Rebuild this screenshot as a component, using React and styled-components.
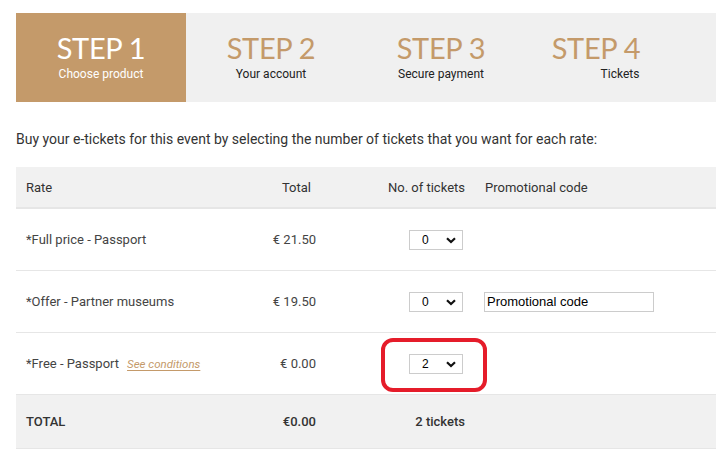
import React from 'react';
import styled, { createGlobalStyle } from 'styled-components';

const GlobalStyle = createGlobalStyle`
  body {
    margin: 0;
    background: #fff;
    font-family: Roboto, "Liberation Sans", sans-serif;
    color: #333;
  }
`;

const steps = [
  { num: 1, label: 'Choose product', active: true },
  { num: 2, label: 'Your account' },
  { num: 3, label: 'Secure payment' },
  { num: 4, label: 'Tickets', shift: 24 },
];

const rows = [
  { rate: '*Full price - Passport', total: '€ 21.50', qty: '0' },
  { rate: '*Offer - Partner museums', total: '€ 19.50', qty: '0', promo: true },
  { rate: '*Free - Passport', total: '€ 0.00', qty: '2', conditions: true, marked: true },
];

const Chevron = () => (
  <svg width="10" height="7" viewBox="0 0 10 7">
    <path d="M1 1.2 L5 5 L9 1.2" fill="none" stroke="#111" strokeWidth="2.2" />
  </svg>
);

const App = () => {
  return (
    <Page>
      <GlobalStyle />
      <StepBar>
        {steps.map((s) => (
          <Step key={s.num} $active={s.active}>
            <StepTitle $active={s.active}>STEP {s.num}</StepTitle>
            <StepLabel $active={s.active} $shift={s.shift || 0}>{s.label}</StepLabel>
          </Step>
        ))}
      </StepBar>

      <Intro>Buy your e-tickets for this event by selecting the number of tickets that you want for each rate:</Intro>

      <Table>
        <HeadRow>
          <Cell>Rate</Cell>
          <NumCell $pad={5}>Total</NumCell>
          <NumCell>No. of tickets</NumCell>
          <PromoCell>Promotional code</PromoCell>
        </HeadRow>
        {rows.map((r) => (
          <Row key={r.rate}>
            <Cell>
              {r.rate}
              {r.conditions && <Conditions href="#">See conditions</Conditions>}
            </Cell>
            <NumCell>{r.total}</NumCell>
            <NumCell>
              <SelectBox>
                <Select defaultValue={r.qty}>
                  {[0, 1, 2, 3, 4, 5].map((n) => (
                    <option key={n} value={String(n)}>{n}</option>
                  ))}
                </Select>
                <ChevronWrap><Chevron /></ChevronWrap>
                {r.marked && <Marker />}
              </SelectBox>
            </NumCell>
            <PromoCell>
              {r.promo && <PromoInput defaultValue="Promotional code" />}
            </PromoCell>
          </Row>
        ))}
        <TotalRow>
          <Cell>TOTAL</Cell>
          <NumCell>€0.00</NumCell>
          <NumCell>2 tickets</NumCell>
          <PromoCell />
        </TotalRow>
      </Table>
    </Page>
  );
};

export default App;

const Page = styled.div`
  padding: 13px 4px 0 16px;
  width: 700px;
`;

const StepBar = styled.div`
  display: grid;
  grid-template-columns: 170px 170px 170px 140px 1fr;
  height: 89px;
  background: #f0f0f0;
`;

const Step = styled.div`
  display: flex;
  flex-direction: column;
  align-items: center;
  padding-top: 18px;
  background: ${(p) => (p.$active ? '#c49a6a' : 'transparent')};
`;

const StepTitle = styled.div`
  font-family: Lato, "Open Sans", sans-serif;
  font-weight: 400;
  font-size: 29px;
  line-height: 34px;
  letter-spacing: -0.3px;
  color: ${(p) => (p.$active ? '#ffffff' : '#c49a6a')};
`;

const StepLabel = styled.div`
  font-size: 12px;
  line-height: 16px;
  margin-top: 1px;
  margin-left: ${(p) => p.$shift * 2}px;
  color: ${(p) => (p.$active ? '#ffffff' : '#222')};
`;

const Intro = styled.p`
  margin: 28px 0 0;
  font-size: 14px;
  line-height: 18px;
  color: #333;
`;

const Table = styled.div`
  margin-top: 19px;
  display: flex;
  flex-direction: column;
  border-bottom: 1px solid #e6e6e6;
`;

const Row = styled.div`
  display: grid;
  grid-template-columns: 240px 60px 149px 1fr;
  align-items: center;
  height: 61px;
  font-size: 13px;
  color: #444;
  & + & {
    border-top: 1px solid #e6e6e6;
  }
`;

const HeadRow = styled(Row)`
  height: 40px;
  background: #f1f1f1;
  border-bottom: 1px solid #e6e6e6;
  color: #333;
`;

const TotalRow = styled(Row)`
  height: 53px;
  background: #f1f1f1;
  font-weight: 500;
  border-top: 1px solid #e6e6e6;
  color: #333;
`;

const Cell = styled.div`
  padding-left: 10px;
  white-space: nowrap;
`;

const NumCell = styled.div`
  display: flex;
  justify-content: flex-end;
  padding-right: ${(p) => p.$pad || 0}px;
  white-space: nowrap;
`;

const PromoCell = styled.div`
  padding-left: 20px;
  display: flex;
  align-items: center;
`;

const Conditions = styled.a`
  margin-left: 8px;
  font-size: 11.5px;
  font-style: italic;
  color: #c49a6a;
  text-decoration: underline;
  text-underline-offset: 2px;
`;

const SelectBox = styled.div`
  position: relative;
  width: 54px;
  height: 20px;
  margin-right: 2px;
`;

const Select = styled.select`
  appearance: none;
  width: 100%;
  height: 100%;
  box-sizing: border-box;
  border: 1px solid #cccccc;
  border-radius: 0;
  background: #fff;
  padding: 0 0 0 12px;
  font-family: "Liberation Sans", Arial, sans-serif;
  font-size: 12px;
  color: #000;
`;

const ChevronWrap = styled.span`
  position: absolute;
  right: 7px;
  top: 7px;
  display: flex;
  pointer-events: none;
`;

const Marker = styled.span`
  position: absolute;
  left: -28px;
  right: -24px;
  top: -16px;
  bottom: -18px;
  border: 4px solid #e51c2a;
  border-radius: 12px;
  pointer-events: none;
`;

const PromoInput = styled.input`
  width: 170px;
  height: 20px;
  box-sizing: border-box;
  border: 1px solid #cccccc;
  padding: 0 2px;
  font-family: "Liberation Sans", Arial, sans-serif;
  font-size: 13px;
  color: #000;
  margin-left: -1px;
`;
